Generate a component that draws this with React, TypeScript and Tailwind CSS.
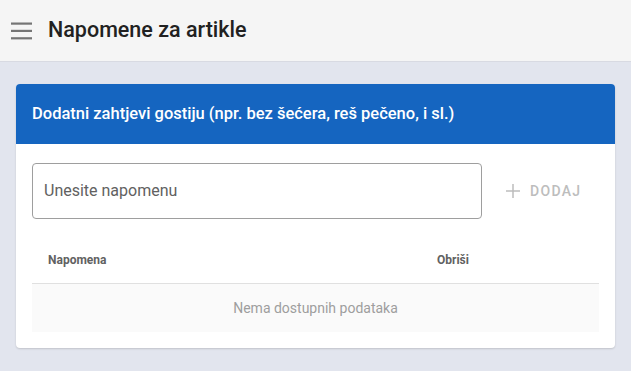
import React from "react";

export default function App() {
  return (
    <div className="w-[631px] h-[371px] bg-[#e2e5ee] flex flex-col overflow-hidden" style={{ fontFamily: "Roboto, 'Liberation Sans', sans-serif" }}>
      <header className="h-[62px] shrink-0 bg-[#f5f5f5] border-b border-[#d8dae2] flex items-center">
        <div className="w-[48px] pl-[11px] flex items-center">
          <svg width="22" height="18" viewBox="0 0 22 18" fill="#757575">
            <rect x="0" y="0.5" width="21" height="2.2" />
            <rect x="0" y="7.8" width="21" height="2.2" />
            <rect x="0" y="15.2" width="21" height="2.2" />
          </svg>
        </div>
        <h1 className="text-[21.5px] font-medium text-[#212121]">Napomene za artikle</h1>
      </header>
      <div className="px-4 pt-[22px]">
        <div className="bg-white rounded-[4px] shadow-[0_1px_2px_rgba(0,0,0,0.15)] overflow-hidden">
          <div className="h-[60px] bg-[#1565c0] flex items-center px-4">
            <span className="text-white text-[16.5px] font-medium">Dodatni zahtjevi gostiju (npr. bez šećera, reš pečeno, i sl.)</span>
          </div>
          <div className="px-4 pt-[19px] pb-[16px]">
            <div className="flex items-center">
              <div className="w-[450px] h-[56px] border border-[#9e9e9e] rounded-[4px] flex items-center px-[11px]">
                <span className="text-[16px] text-[#616161]">Unesite napomenu</span>
              </div>
              <div className="ml-[23px] flex items-center gap-[9px] text-[#bdbdbd]">
                <svg width="16" height="16" viewBox="0 0 16 16" stroke="#bdbdbd" strokeWidth="1.5" fill="none">
                  <path d="M8 1v14M1 8h14" />
                </svg>
                <span className="text-[14px] font-medium tracking-[1.3px]">DODAJ</span>
              </div>
            </div>
            <div className="mt-[17px]">
              <div className="h-[48px] flex items-center border-b border-[#e0e0e0] text-[12px] font-bold text-[#616161]">
                <span className="pl-4 w-[405px]">Napomena</span>
                <span>Obriši</span>
              </div>
              <div className="h-[48px] bg-[#fafafa] flex items-center justify-center text-[14px] text-[#9e9e9e]">
                Nema dostupnih podataka
              </div>
            </div>
          </div>
        </div>
      </div>
    </div>
  );
}
